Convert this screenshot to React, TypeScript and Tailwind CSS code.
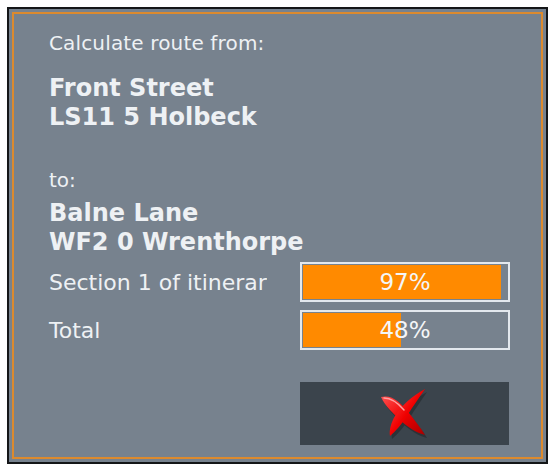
import React from "react";

const font = { fontFamily: "'DejaVu Sans', 'Liberation Sans', sans-serif" };

const ProgressBar = ({ value }: { value: number }) => (
  <div className="relative h-[40px] w-[210px] border-2 border-[#e3e8ee] p-[1px]">
    <div className="relative h-full w-full overflow-hidden bg-[#77828e]">
      <div className="h-full bg-[#ff8a00]" style={{ width: `${value}%` }} />
      <div className="absolute inset-0 flex items-center justify-center text-[23px] text-[#f4f6f8]">
        {value}%
      </div>
    </div>
  </div>
);

const CancelIcon = () => (
  <svg width="54" height="52" viewBox="0 0 54 52">
    <defs>
      <linearGradient id="xr" x1="0" y1="0" x2="1" y2="1">
        <stop offset="0" stopColor="#ff5050" />
        <stop offset="0.5" stopColor="#f00000" />
        <stop offset="1" stopColor="#a80000" />
      </linearGradient>
    </defs>
    <g transform="translate(2 3)" opacity="0.45">
      <path d="M3 9 C 14 6, 23 15, 31 25 C 37 33, 43 40, 47 47 C 38 45, 30 39, 23 33 C 15 25, 7 18, 3 9 Z" fill="#1b1f22" />
      <path d="M47 1 C 34 8, 24 17, 17 28 C 13 35, 11 42, 12 48 C 18 43, 23 37, 29 28 C 35 18, 41 10, 47 1 Z" fill="#1b1f22" />
    </g>
    <path d="M3 9 C 14 6, 23 15, 31 25 C 37 33, 43 40, 47 47 C 38 45, 30 39, 23 33 C 15 25, 7 18, 3 9 Z" fill="url(#xr)" />
    <path d="M47 1 C 34 8, 24 17, 17 28 C 13 35, 11 42, 12 48 C 18 43, 23 37, 29 28 C 35 18, 41 10, 47 1 Z" fill="url(#xr)" />
    <path d="M6 10 C 14 10, 20 15, 26 22" stroke="#ffa0a0" strokeWidth="1.5" fill="none" strokeLinecap="round" />
  </svg>
);

export default function App() {
  return (
    <div className="w-[550px] h-[467px] bg-white pt-[7px] pl-[7px]" style={font}>
      <div className="flex h-[457px] w-[541px] border-2 border-[#141618] bg-[#77828e] p-[3px]">
        <div className="flex flex-1 flex-col border-2 border-[#dc8a2e] pl-[35px] pt-[17px] text-[#eef1f4]">
          <p className="text-[20px] leading-[24px] tracking-[0.15px]">Calculate route from:</p>
          <div className="mt-[19px] text-[24px] font-bold leading-[29px]">
            <p>Front Street</p>
            <p>LS11 5 Holbeck</p>
          </div>
          <p className="mt-[36px] text-[20px] leading-[24px]">to:</p>
          <div className="mt-[7px] text-[24px] font-bold leading-[29px]">
            <p>Balne Lane</p>
            <p>WF2 0 Wrenthorpe</p>
          </div>
          <div className="mt-[5px] flex flex-col gap-[8px]">
            <div className="flex items-center">
              <div className="w-[251px] whitespace-nowrap text-[22px]">
                <div className="w-[218px] overflow-hidden">Section 1 of itinerary</div>
              </div>
              <ProgressBar value={97} />
            </div>
            <div className="flex items-center">
              <div className="w-[251px] text-[22px]">Total</div>
              <ProgressBar value={48} />
            </div>
          </div>
          <div className="mt-[32px] flex">
            <button className="ml-[251px] flex h-[63px] w-[209px] items-center justify-center bg-[#3b444c]">
              <CancelIcon />
            </button>
          </div>
        </div>
      </div>
    </div>
  );
}
